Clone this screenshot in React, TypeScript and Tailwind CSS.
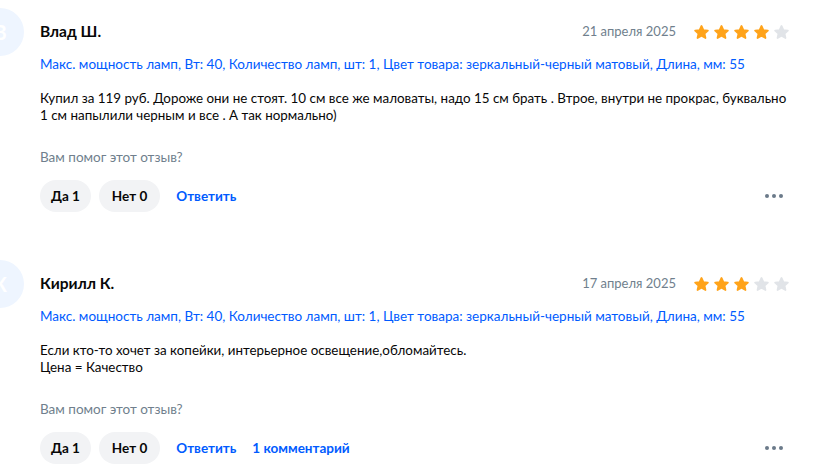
import { Fragment } from 'react'

const params =
  'Макс. мощность ламп, Вт: 40, Количество ламп, шт: 1, Цвет товара: зеркальный-черный матовый, Длина, мм: 55'

const reviews = [
  {
    letter: 'В',
    name: 'Влад Ш.',
    date: '21 апреля 2025',
    rating: 4,
    text: [
      'Купил за 119 руб. Дороже они не стоят. 10 см все же маловаты, надо 15 см брать . Втрое, внутри не прокрас, буквально',
      '1 см напылили черным и все . А так нормально)',
    ],
    yes: 1,
    no: 0,
    comments: 0,
  },
  {
    letter: 'К',
    name: 'Кирилл К.',
    date: '17 апреля 2025',
    rating: 3,
    text: ['Если кто-то хочет за копейки, интерьерное освещение,обломайтесь.', 'Цена = Качество'],
    yes: 1,
    no: 0,
    comments: 1,
  },
]

function Star({ filled }: { filled: boolean }) {
  return (
    <svg width="17" height="17" viewBox="0 0 24 24" className={filled ? 'text-[#ffa31a]' : 'text-[#e1e4e8]'}>
      <path
        fill="currentColor"
        stroke="currentColor"
        strokeWidth="2.5"
        strokeLinejoin="round"
        d="M12 2.8l2.7 5.8 6.3.7-4.7 4.3 1.3 6.2L12 16.6l-5.6 3.2 1.3-6.2L3 9.3l6.3-.7z"
      />
    </svg>
  )
}

export default function App() {
  return (
    <div className="min-h-screen bg-white overflow-hidden font-['Lato',sans-serif] text-[#070707]">
      <div className="-ml-6 pt-2 pr-[50px] flex flex-col gap-[48px]">
        {reviews.map((r) => (
          <div key={r.name} className="flex gap-4">
            <div className="w-12 h-12 shrink-0 rounded-full bg-[#eef5ff] flex items-center justify-center text-white text-xl font-bold">
              {r.letter}
            </div>
            <div className="flex-1 min-w-0">
              <div className="h-12 flex items-center justify-between">
                <span className="text-[15.5px] font-bold">{r.name}</span>
                <div className="flex items-center gap-[17px]">
                  <span className="text-[13px] text-[#707f8d]">{r.date}</span>
                  <div className="flex gap-[3px]">
                    {[1, 2, 3, 4, 5].map((i) => (
                      <Star key={i} filled={i <= r.rating} />
                    ))}
                  </div>
                </div>
              </div>
              <div className="-mt-px text-[13.5px] leading-[18px] text-[#005bff] whitespace-nowrap">{params}</div>
              <div className="mt-[17px] text-[13.4px] leading-[17px] whitespace-nowrap">
                {r.text.map((t, i) => (
                  <Fragment key={i}>
                    {i > 0 && <br />}
                    {t}
                  </Fragment>
                ))}
              </div>
              <div className="mt-[24px] text-[13.5px] leading-[18px] text-[#707f8d]">Вам помог этот отзыв?</div>
              <div className="mt-[14px] flex items-center">
                <button className="h-8 px-[11px] rounded-full bg-[#f2f3f5] text-[13.5px] font-bold">Да {r.yes}</button>
                <button className="ml-2 h-8 px-[13px] rounded-full bg-[#f2f3f5] text-[13.5px] font-bold">Нет {r.no}</button>
                <span className="ml-4 text-[13.5px] font-bold text-[#005bff]">Ответить</span>
                {r.comments > 0 && (
                  <span className="ml-4 text-[13.5px] font-bold text-[#005bff]">{r.comments} комментарий</span>
                )}
                <div className="ml-auto mr-[7px] flex gap-[3px]">
                  <span className="w-[4px] h-[4px] rounded-full bg-[#6b7a8a]" />
                  <span className="w-[4px] h-[4px] rounded-full bg-[#6b7a8a]" />
                  <span className="w-[4px] h-[4px] rounded-full bg-[#6b7a8a]" />
                </div>
              </div>
            </div>
          </div>
        ))}
      </div>
    </div>
  )
}
